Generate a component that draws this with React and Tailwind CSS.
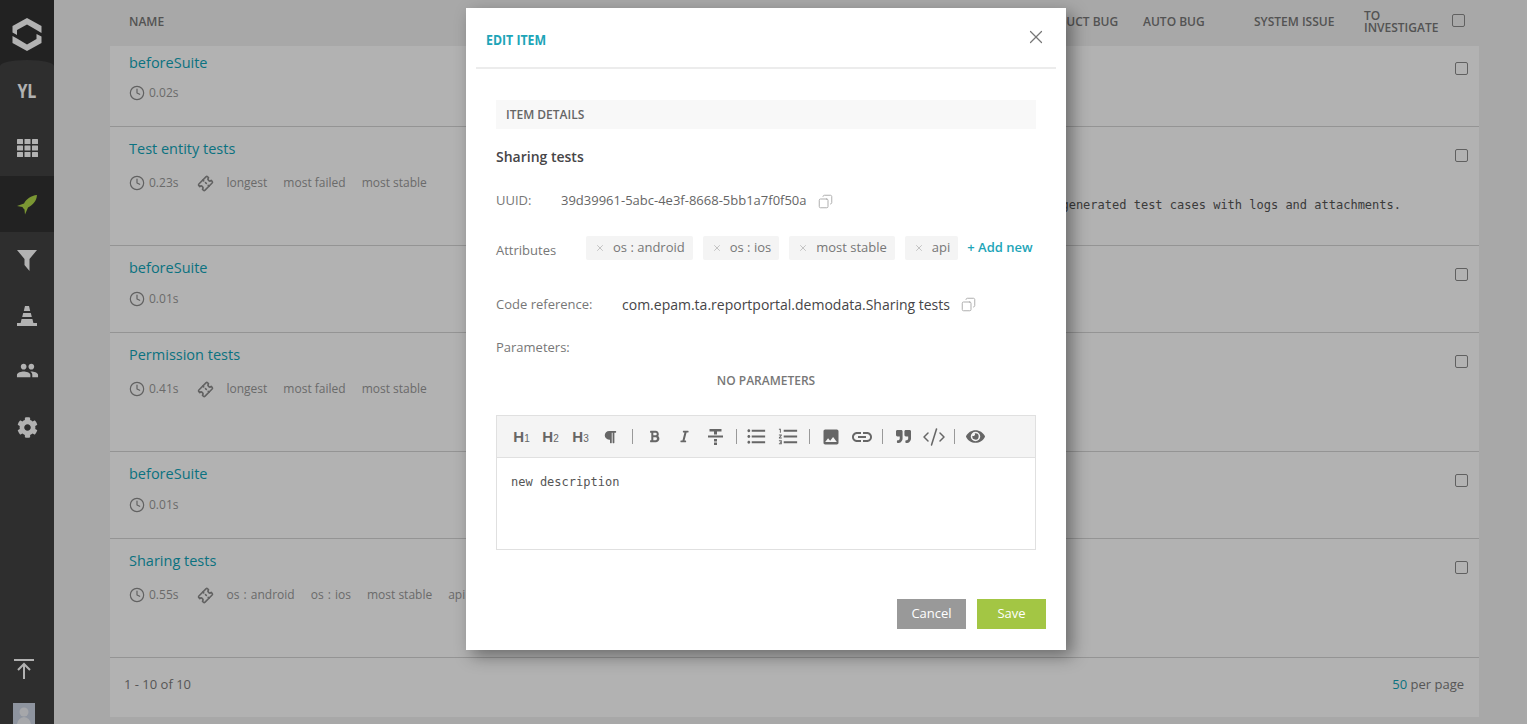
import { Clock, Copy, Ticket, X, CodeXml } from "lucide-react";
import { FaCog, FaParagraph, FaBold, FaItalic, FaEye, FaQuoteRight } from "react-icons/fa";
import { MdPeople, MdFormatListBulleted, MdFormatListNumbered, MdPhoto, MdLink } from "react-icons/md";

const rows = [
  { name: "beforeSuite", time: "0.02s", first: true },
  { name: "Test entity tests", time: "0.23s", tags: ["longest", "most failed", "most stable"], tall: true, description: "Test with generated test cases with logs and attachments." },
  { name: "beforeSuite", time: "0.01s" },
  { name: "Permission tests", time: "0.41s", tags: ["longest", "most failed", "most stable"], tall: true },
  { name: "beforeSuite", time: "0.01s" },
  { name: "Sharing tests", time: "0.55s", tags: ["os : android", "os : ios", "most stable", "api"], tall: true },
];

const attributes = ["os : android", "os : ios", "most stable", "api"];

function Logo() {
  return (
    <svg width="30" height="33" viewBox="0 0 30 33" fill="#fff">
      <path d="M15 0 L29.5 8 V15 L24.5 12 L15 6.5 L5 12 V17 L0.5 14.5 V8 Z" />
      <path d="M15 33 L0.5 25 V18 L5 20.5 L15 26.5 L24.5 21 V16 L29.5 18.5 V25 Z" />
    </svg>
  );
}

function GridIcon() {
  return (
    <svg width="21" height="18" viewBox="0 0 21 18" fill="currentColor">
      {[0, 6.5, 13].map((y) =>
        [0, 7.5, 15].map((x) => <rect key={`${x}-${y}`} x={x} y={y} width="6" height="5" rx="0.5" />)
      )}
    </svg>
  );
}

function RocketIcon() {
  return (
    <svg width="21" height="21" viewBox="0 0 21 21" fill="#b0d84a">
      <path d="M20 1 C14 1.5 9.5 5 7 9.5 L0 12 L5.5 13 L6 14 L7.5 15.5 L8 20.5 L11 13.5 C16 11 19.5 7 20 1 Z" />
    </svg>
  );
}

function FilterIcon() {
  return (
    <svg width="20" height="21" viewBox="0 0 20 21" fill="currentColor">
      <path d="M0 0 H20 L12.5 9 V21 L7.5 15 V9 Z" />
    </svg>
  );
}

function ConeIcon() {
  return (
    <svg width="20" height="20" viewBox="0 0 20 20" fill="currentColor">
      <path d="M8 0 H12 L13.2 5 H6.8 Z" />
      <path d="M6.2 7 H13.8 L14.8 11 H5.2 Z" />
      <path d="M4.6 13 H15.4 L16.4 17 H20 V20 H0 V17 H3.6 Z" />
    </svg>
  );
}

function NavItem({ active, children }) {
  return (
    <div className={`flex h-14 items-center justify-center text-white ${active ? "bg-[#323232]" : ""}`}>
      {children}
    </div>
  );
}

function Sidebar() {
  return (
    <aside className="flex h-full w-[54px] shrink-0 flex-col bg-[#323232]">
      <div className="flex h-[60px] shrink-0 items-center justify-center pt-[8px] text-white">
        <Logo />
      </div>
      <div className="flex flex-1 flex-col rounded-t-[50%_6px] bg-[#424243]">
        <div className="flex h-[60px] items-center justify-center pt-[2px] text-[20px] font-bold text-white">
          <span className="inline-block scale-x-[0.8]">YL</span>
        </div>
        <NavItem>
          <GridIcon />
        </NavItem>
        <NavItem active>
          <RocketIcon />
        </NavItem>
        <NavItem>
          <FilterIcon />
        </NavItem>
        <NavItem>
          <ConeIcon />
        </NavItem>
        <NavItem>
          <MdPeople size={23} className="-translate-y-[2px]" />
        </NavItem>
        <NavItem>
          <FaCog size={21} className="-translate-y-[1px]" />
        </NavItem>
        <div className="mt-auto flex flex-col items-start">
          <svg width="20" height="20" viewBox="0 0 20 20" fill="none" stroke="#fff" strokeWidth="2" className="mb-[24px] ml-[14px]">
            <path d="M0 1 H20" />
            <path d="M10 20 V6 M4 11 L10 5 L16 11" />
          </svg>
          <div className="ml-[13px] flex h-[21px] w-[22px] items-start justify-center overflow-hidden bg-[#ccd4e4]">
            <svg width="14" height="21" viewBox="0 0 14 21" fill="#eef0f4">
              <circle cx="7" cy="9" r="4.5" />
              <path d="M0 21 Q1 15 7 14 Q13 15 14 21 Z" />
            </svg>
          </div>
        </div>
      </div>
    </aside>
  );
}

function Checkbox({ className = "" }) {
  return <div className={`h-[13px] w-[13px] shrink-0 rounded-[2px] border border-[#8a8a8a] ${className}`} />;
}

function TableRow({ row }) {
  const height = row.tall ? "h-[119px] pt-[12px]" : row.first ? "h-[81px] pt-[7px]" : "h-[87px] pt-[12px]";
  const metaGap = row.tall ? "mt-[14px]" : row.first ? "mt-[10px]" : "mt-[11px]";
  return (
    <div className={`relative border-b border-[#d4d4d4] bg-white pl-[19px] ${height}`}>
      <div className="flex h-[20px] items-center font-medium text-[14.5px] text-[#10a4b8]">{row.name}</div>
      <div className={`flex h-[20px] items-center text-[12px] text-[#999] ${metaGap}`}>
        <Clock size={16} strokeWidth={1.8} className="text-[#8c8c8c]" />
        <span className="ml-[4px]">{row.time}</span>
        {row.tags && (
          <>
            <Ticket size={15} strokeWidth={2.5} className="ml-[20px] -rotate-45 text-[#8c8c8c]" />
            <div className="ml-[13px] flex gap-[16px]">
              {row.tags.map((tag) => (
                <span key={tag} className={`whitespace-nowrap ${tag.includes(":") ? "[word-spacing:1px]" : ""}`}>{tag}</span>
              ))}
            </div>
          </>
        )}
      </div>
      {row.description && (
        <div className="mt-[4px] flex h-[16px] items-center justify-end whitespace-nowrap pr-[78px] font-['DejaVu_Sans_Mono',monospace] text-[12px] text-[#555]">
          {row.description}
        </div>
      )}
      <Checkbox className={`absolute right-[11px] ${row.first ? "top-[16px]" : "top-[22px]"}`} />
    </div>
  );
}

function Table() {
  return (
    <main className="flex h-full flex-1 flex-col pl-[56px] pr-[48px]">
      <div className="flex h-[46px] shrink-0 items-center pb-[2px] pl-[19px] pr-[14px] text-[12px] font-semibold text-[#777]">
        <div className="flex-1">NAME</div>
        <div className="w-[110px]">PRODUCT BUG</div>
        <div className="w-[111px]">AUTO BUG</div>
        <div className="w-[110px]">SYSTEM ISSUE</div>
        <div className="w-[88px]">
          <div className="w-[80px] leading-[12px]">TO INVESTIGATE</div>
        </div>
        <Checkbox className="-mt-[3px]" />
      </div>
      {rows.map((row, index) => (
        <TableRow key={index} row={row} />
      ))}
      <div className="flex h-[59px] shrink-0 items-center justify-between bg-white pb-[6px] pl-[14px] pr-[15px] text-[13px] text-[#7c7c7c]">
        <span>1 - 10 of 10</span>
        <span>
          <span className="text-[#10a4b8]">50</span> per page
        </span>
      </div>
    </main>
  );
}

function Sep() {
  return <span className="h-[15px] w-px bg-[#999]" />;
}

function HeadingIcon({ level }) {
  return (
    <span className="flex w-[19px] items-end justify-center font-['Liberation_Sans',sans-serif] font-bold text-[#666]">
      <span className="text-[15px] leading-[15px]">H</span>
      <span className="text-[10px] font-normal leading-[11px]">{level}</span>
    </span>
  );
}

function StrikeIcon() {
  return (
    <svg width="15" height="16" viewBox="0 0 15 16" fill="#666">
      <rect x="1.5" y="0" width="12" height="2.5" />
      <rect x="6" y="2" width="3" height="3.5" />
      <rect x="0" y="6.5" width="15" height="2" />
      <rect x="6" y="10" width="3" height="2.5" />
      <rect x="6" y="13.5" width="3" height="2.5" />
    </svg>
  );
}

function Toolbar() {
  return (
    <div className="flex h-[42px] items-center border-b border-[#e0e0e0] bg-[#f4f4f4] pl-[15px] text-[#666]">
      <HeadingIcon level="1" />
      <span className="ml-[10px]"><HeadingIcon level="2" /></span>
      <span className="ml-[11px]"><HeadingIcon level="3" /></span>
      <FaParagraph size={14} className="ml-[13px]" />
      <span className="ml-[15px] flex items-center"><Sep /></span>
      <FaBold size={13} className="ml-[15px]" />
      <FaItalic size={13} className="ml-[17px]" />
      <span className="ml-[17px] flex items-center"><StrikeIcon /></span>
      <span className="ml-[13px] flex items-center"><Sep /></span>
      <MdFormatListBulleted size={23} className="ml-[8px]" />
      <MdFormatListNumbered size={23} className="ml-[9px]" />
      <span className="ml-[9px] flex items-center"><Sep /></span>
      <MdPhoto size={20} className="ml-[11px]" />
      <MdLink size={24} className="ml-[9px]" />
      <span className="ml-[8px] flex items-center"><Sep /></span>
      <FaQuoteRight size={15} className="ml-[13px]" />
      <CodeXml size={24} strokeWidth={1.5} className="ml-[11px]" />
      <span className="ml-[8px] flex items-center"><Sep /></span>
      <FaEye size={19} className="ml-[11px]" />
    </div>
  );
}

function EditModal() {
  return (
    <div className="h-[642px] w-[600px] bg-white px-[10px] shadow-[6px_6px_16px_rgba(0,0,0,0.4)]">
      <div className="flex h-[61px] items-center justify-between border-b-2 border-[#ececec] pl-[10px] pr-[9px]">
        <h2 className="mt-[4px] origin-left scale-x-[0.82] whitespace-nowrap text-[15px] font-bold text-[#1da5b8]">EDIT ITEM</h2>
        <X size={22} strokeWidth={1.3} className="-mt-[2px] text-[#777]" />
      </div>
      <div className="px-[20px]">
        <div className="mt-[31px] flex h-[29px] items-center bg-[#f8f8f8] pl-[10px] text-[12px] font-semibold text-[#666]">ITEM DETAILS</div>
        <div className="mt-[16px] flex h-[22px] items-center text-[14px] font-semibold text-[#464547]">Sharing tests</div>
        <div className="mt-[23px] flex h-[22px] items-center text-[13px] text-[#777]">
          <span className="w-[65px]">UUID:</span>
          <span className="text-[#666]">39d39961-5abc-4e3f-8668-5bb1a7f0f50a</span>
          <Copy size={15} strokeWidth={1.5} className="ml-[11px] -scale-x-100 text-[#aaa]" />
        </div>
        <div className="mt-[24px] flex h-[24px] text-[13px]">
          <span className="mt-[5px] w-[90px] text-[#777]">Attributes</span>
          <div className="flex items-center gap-[10px] whitespace-nowrap">
            {attributes.map((attr) => (
              <span key={attr} className="flex h-[24px] items-center gap-[8px] rounded-[2px] bg-[#f4f4f4] pb-[1px] pl-[9px] pr-[8px] text-[#777]">
                <X size={10} strokeWidth={1.3} className="text-[#999]" />
                {attr}
              </span>
            ))}
            <span className="-ml-[1px] font-semibold text-[#1da5b8]">+ Add new</span>
          </div>
        </div>
        <div className="mt-[33px] flex h-[22px] items-center text-[13px] text-[#777]">
          <span className="mt-[1px] w-[126px]">Code reference:</span>
          <span className="text-[14px] text-[#464547]">com.epam.ta.reportportal.demodata.Sharing tests</span>
          <Copy size={15} strokeWidth={1.5} className="ml-[11px] -scale-x-100 text-[#aaa]" />
        </div>
        <div className="mt-[22px] flex h-[22px] items-center text-[13px] text-[#777]">Parameters:</div>
        <div className="mt-[11px] flex h-[22px] items-center justify-center text-[12px] font-semibold text-[#777]">NO PARAMETERS</div>
        <div className="mt-[23px] h-[135px] border border-[#e0e0e0]">
          <Toolbar />
          <div className="pl-[14px] pt-[16px] font-['DejaVu_Sans_Mono',monospace] text-[12px] leading-[16px] text-[#555]">new description</div>
        </div>
      </div>
      <div className="mt-[49px] flex justify-end gap-[11px] pr-[10px]">
        <button className="h-[30px] w-[69px] bg-[#999] text-[13px] text-white">Cancel</button>
        <button className="h-[30px] w-[69px] bg-[#a3c644] text-[13px] text-white">Save</button>
      </div>
    </div>
  );
}

export default function App() {
  return (
    <div className="relative flex h-[724px] w-full overflow-hidden bg-[#f1f1f1] font-['Open_Sans',sans-serif]">
      <Sidebar />
      <Table />
      <div className="absolute inset-0 flex items-start justify-center bg-black/30 pl-[5px] pt-[8px]">
        <EditModal />
      </div>
    </div>
  );
}
